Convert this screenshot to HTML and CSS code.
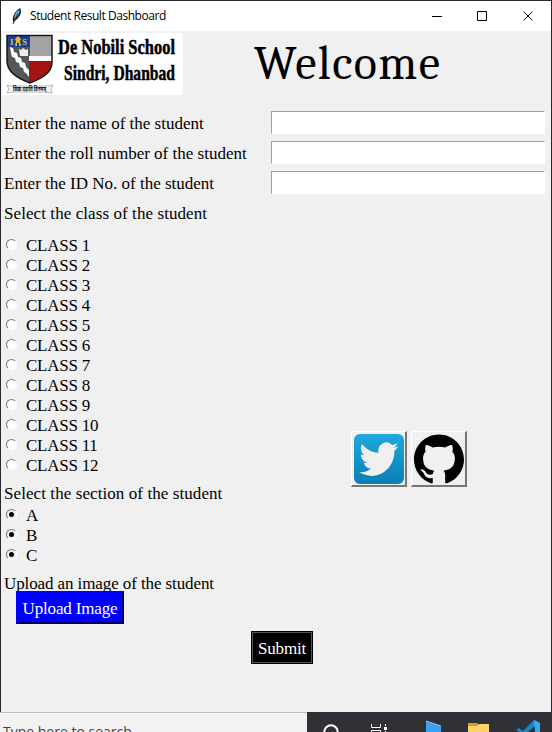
FILE: index.html
```html
<!DOCTYPE html>
<html lang="en">
<head>
<meta charset="utf-8">
<title>Student Result Dashboard</title>
<link rel="stylesheet" href="styles.css">
</head>
<body>
<div class="window">
  <header class="titlebar">
    <svg class="feather" width="12" height="18" viewBox="0 0 12 18"><path d="M2 15C1 10 3 5 9 1c2 3 1 8-4 12z" fill="#15202c"/><path d="M3.500 12C3 7 6 4 8.500 2.500c0 3-1 6-4 9z" fill="#75b5e8"/><path d="M2 17L7 6" stroke="#27333d" fill="none"/></svg>
    <span class="title">Student Result Dashboard</span>
    <svg class="controls" width="102" height="12" viewBox="0 0 102 12" fill="none" stroke="#000"><path d="M0 6.500h10M45.500 1.500h9v9h-9zM91.500 1.500l9 9M100.500 1.500l-9 9"/></svg>
  </header>
  <main class="content">
    <div class="banner">
      <svg class="logo" width="181" height="62" viewBox="0 0 181 62">
        <rect width="181" height="62" fill="#fff"/>
        <clipPath id="shield"><path d="M5 2.500H50V29C50 41 38 46 28 50C17 46 5 40 5 28Z"/></clipPath>
        <g clip-path="url(#shield)">
          <path d="M5 2h23v49H5z" fill="#55565a"/><path d="M28 2h23v22H28z" fill="#a3a3a5"/>
          <path d="M5 2h23v12H5z" fill="#193f94"/><path d="M27 23h24v5H27z" fill="#fff"/><path d="M27 28h24v23H27z" fill="#a11513"/>
          <path d="M8 14l3 1 1 4 3 1 1 4 3 1 1 4 3 1 1 4 3 3v7l-3-4-2-1-1-4-3-1-1-4-3-1-1-4-3-1-1-4z" fill="#fff"/>
          <path d="M17 16l2 1 2-2 3 2 2-1v7h-8z" fill="#eee"/>
        </g>
        <path d="M5 2.500H50V29C50 41 38 46 28 50C17 46 5 40 5 28Z" fill="none" stroke="#17171b" stroke-width="1.500"/>
        <path d="M13 13l1-5-1-2 3-3 3 3-1 2 1 5h-2v-3h-2v3z" fill="#e7b92c"/>
        <text class="crest" x="8" y="12">I</text><text class="crest" x="20" y="12">S</text>
        <path d="M5 52l3 1h39l4-1-2 4 1 4-5-1H11l-6 1 2-4z" fill="#f5f5f5" stroke="#999" stroke-width=".7"/>
        <text class="motto" x="11" y="58" textLength="33" lengthAdjust="spacingAndGlyphs">विद्या ददाति विनयम्</text>
        <text class="school" x="56" y="21" textLength="117" lengthAdjust="spacingAndGlyphs">De Nobili School</text>
        <text class="school" x="62" y="47" textLength="111" lengthAdjust="spacingAndGlyphs">Sindri, Dhanbad</text>
      </svg>
      <h1 class="welcome">Welcome</h1>
    </div>
    <label class="field"><span>Enter the name of the student</span><input type="text"></label>
    <label class="field"><span>Enter the roll number of the student</span><input type="text"></label>
    <label class="field"><span>Enter the ID No. of the student</span><input type="text"></label>
    <div class="prompt">Select the class of the student</div>
    <div class="choices">
      <div class="list">
        <label class="option"><i class="radio"></i>CLASS 1</label>
        <label class="option"><i class="radio"></i>CLASS 2</label>
        <label class="option"><i class="radio"></i>CLASS 3</label>
        <label class="option"><i class="radio"></i>CLASS 4</label>
        <label class="option"><i class="radio"></i>CLASS 5</label>
        <label class="option"><i class="radio"></i>CLASS 6</label>
        <label class="option"><i class="radio"></i>CLASS 7</label>
        <label class="option"><i class="radio"></i>CLASS 8</label>
        <label class="option"><i class="radio"></i>CLASS 9</label>
        <label class="option"><i class="radio"></i>CLASS 10</label>
        <label class="option"><i class="radio"></i>CLASS 11</label>
        <label class="option"><i class="radio"></i>CLASS 12</label>
      </div>
      <div class="social">
        <button class="icon" aria-label="Twitter"><svg width="50" height="50" viewBox="0 0 50 50"><defs><linearGradient id="sky" x2="0" y2="1"><stop stop-color="#20a8dc"/><stop offset="1" stop-color="#087fb5"/></linearGradient></defs><rect width="50" height="50" rx="6" fill="url(#sky)"/><path transform="translate(5.300 4.500) scale(1.630 1.720)" fill="#f0f0f0" d="M23.950 4.570a10 10 0 0 1-2.820.78 4.960 4.960 0 0 0 2.160-2.730c-.95.56-2 .96-3.130 1.190a4.920 4.920 0 0 0-8.380 4.480C7.690 8.090 4.070 6.130 1.640 3.160a4.820 4.820 0 0 0-.67 2.480c0 1.710.87 3.210 2.190 4.100a4.900 4.900 0 0 1-2.230-.62v.06a4.920 4.920 0 0 0 3.950 4.830 5 5 0 0 1-2.210.08 4.940 4.940 0 0 0 4.600 3.420A9.870 9.870 0 0 1 0 19.540a14 14 0 0 0 7.550 2.210c9.050 0 14-7.500 14-13.980 0-.21 0-.42-.02-.63a9.940 9.940 0 0 0 2.420-2.570z"/></svg></button>
        <button class="icon" aria-label="GitHub"><svg width="50" height="50" viewBox="0 0 24 24"><path d="M12 .297c-6.630 0-12 5.373-12 12 0 5.303 3.438 9.800 8.205 11.385.6.113.82-.258.82-.577 0-.285-.01-1.040-.015-2.040-3.338.724-4.042-1.610-4.042-1.610C4.422 18.070 3.633 17.700 3.633 17.700c-1.087-.744.084-.729.084-.729 1.205.084 1.838 1.236 1.838 1.236 1.070 1.835 2.809 1.305 3.495.998.108-.776.417-1.305.76-1.605-2.665-.3-5.466-1.332-5.466-5.930 0-1.310.465-2.380 1.235-3.220-.135-.303-.54-1.523.105-3.176 0 0 1.005-.322 3.300 1.230.96-.267 1.980-.399 3-.405 1.020.006 2.040.138 3 .405 2.280-1.552 3.285-1.230 3.285-1.230.645 1.653.24 2.873.12 3.176.765.840 1.230 1.910 1.230 3.220 0 4.610-2.805 5.625-5.475 5.920.42.36.81 1.096.81 2.220 0 1.606-.015 2.896-.015 3.286 0 .315.21.690.825.570C20.565 22.092 24 17.592 24 12.297c0-6.627-5.373-12-12-12"/></svg></button>
      </div>
    </div>
    <div class="prompt section">Select the section of the student</div>
    <div class="list">
      <label class="option"><i class="radio on"></i>A</label>
      <label class="option"><i class="radio on"></i>B</label>
      <label class="option"><i class="radio on"></i>C</label>
    </div>
    <div class="prompt upload-label">Upload an image of the student</div>
    <button class="upload">Upload Image</button>
    <button class="submit">Submit</button>
  </main>
</div>
<footer class="taskbar">
  <div class="search">Type here to search</div>
  <svg class="apps" width="245" height="20" viewBox="0 0 245 20">
    <circle cx="24" cy="20" r="6.700" fill="none" stroke="#fff" stroke-width="2"/>
    <path d="M64.500 12v3.500h9V12M64.500 20v-1.500h9V20M78.500 12v2M78.500 19v1" fill="none" stroke="#fff"/><path d="M77 15h3v3h-3z" fill="#fff"/>
    <path d="M119 9l15 5v6h-15z" fill="#3ba2ef"/><path d="M119 9l15 5" stroke="#86c8f5" fill="none"/>
    <path d="M161 11h9l2 2h10v7h-21z" fill="#d89e18"/><path d="M161 14h9l2-2h10v8h-21z" fill="#ffd267"/>
    <path d="M212 20l-3-2 3-2 5 4zM215 20l12-12 6 3v9h-5v-6l-7 6z" fill="#1686cc"/><path d="M227 8l6 3v9h-5z" fill="#36a9ef"/>
  </svg>
</footer>
</body>
</html>
```
FILE: styles.css
```css
* { box-sizing: border-box; }
body {
  margin: 0;
  width: 552px;
  height: 732px;
  overflow: hidden;
  background: #f0f0f0;
  color: #000;
  font: 17px/20px "Liberation Serif", serif;
}
.window {
  height: 712px;
  border: 1px solid #29272b;
  border-bottom: 0;
  background: #f0f0f0;
}
.titlebar {
  display: flex;
  align-items: center;
  height: 30px;
  padding: 0 17px 0 10px;
  background: #fff;
}
.title {
  margin-left: 7px;
  font: 12px/18px "Open Sans", "Noto Sans", sans-serif;
  letter-spacing: -0.45px;
}
.controls { margin-left: auto; }
.content { display: flow-root; }
.banner { display: flex; height: 77px; }
.logo { margin: 2px 0 0 1px; overflow: visible; }
.school { font: bold 22px "Liberation Serif", serif; stroke: #000; stroke-width: .5px; }
.crest { font: bold 9px "Liberation Serif", serif; fill: #e7b92c; }
.motto { font: bold 6px "Noto Sans", sans-serif; }
.welcome {
  margin: 5px 0 0 71px;
  font: 48px/56px Cambria, Caladea, "Liberation Serif", serif;
  letter-spacing: 1.4px;
}
.field { display: flex; height: 30px; padding-left: 3px; align-items: center; }
.field span { width: 267px; padding-top: 2px; }
.field input {
  width: 274px;
  height: 23px;
  margin-bottom: 1px;
  padding: 1px 3px;
  border: 1px solid;
  border-color: #a0a0a0 #fff #fff #a0a0a0;
  border-radius: 0;
  background: #fff;
  outline: 0;
}
.prompt { padding-left: 3px; height: 30px; line-height: 32px; letter-spacing: 0.08px; }
.choices { display: flex; margin-top: 7px; height: 240px; }
.list { width: 350px; }
.option { display: flex; align-items: center; height: 20px; padding-top: 2px; letter-spacing: -0.25px; }
.radio {
  display: grid;
  place-items: center;
  width: 11px;
  height: 11px;
  margin: -4px 9px 0 5px;
  border: 1px solid;
  border-color: #777 #fff #fff #777;
  border-radius: 50%;
  background: #fff;
}
.radio.on { background: #f0f0f0; }
.radio.on::after { content: ""; width: 5px; height: 5px; border-radius: 50%; background: #000; }
.social { display: flex; gap: 4px; margin-top: 196px; }
button { border-radius: 0; font: inherit; }
.icon {
  width: 56px;
  height: 56px;
  padding: 2px;
  border: 1px solid;
  border-width: 1px 2px 2px 1px;
  border-color: #fff #777 #777 #fff;
  background: #f0f0f0;
}
.icon svg { display: block; }
.section { margin-top: 3px; height: 27px; }
.upload-label { height: 18px; margin-top: 8px; line-height: 22px; letter-spacing: -0.1px; overflow: hidden; }
.upload, .submit { display: block; height: 33px; padding: 2px 0 0; color: #fff; letter-spacing: -0.15px; }
.upload {
  width: 108px;
  margin-left: 15px;
  border: 2px solid;
  border-color: #0000ff #000064 #000064 #0000ff;
  background: #0000ff;
}
.submit {
  width: 62px;
  margin: 7px 0 0 250px;
  border: 1px solid #000;
  background: #000;
  box-shadow: inset 0 0 0 1px #555;
}
.taskbar { display: flex; height: 20px; background: #303136; }
.search {
  width: 307px;
  padding: 9px 0 0 3px;
  border-top: 1px solid #bcbcbc;
  background: #f2f2f2;
  color: #444;
  font: 14px/20px "Open Sans", sans-serif;
  overflow: hidden;
}
```
